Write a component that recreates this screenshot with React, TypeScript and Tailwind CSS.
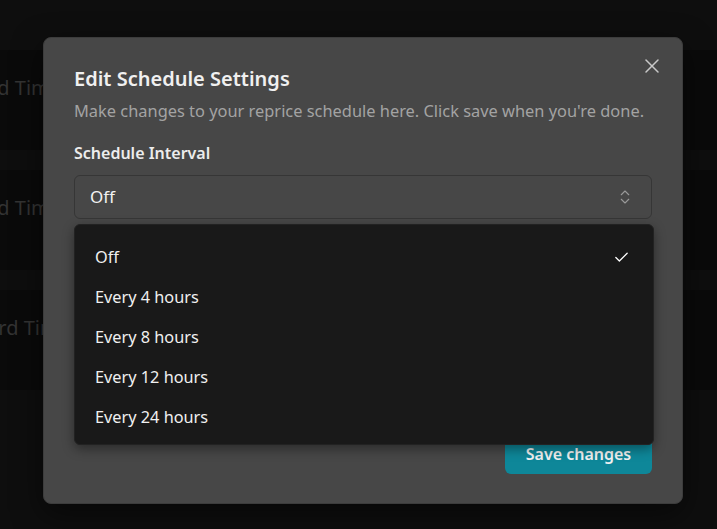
import React from "react";
import { X, ChevronsUpDown, Check } from "lucide-react";

const font = { fontFamily: '"Noto Sans", "Open Sans", sans-serif' };

export default function App() {
  const cards = ["Scheduled Time", "Scheduled Time", "Standard Time"];
  const items = ["Off", "Every 4 hours", "Every 8 hours", "Every 12 hours", "Every 24 hours"];
  return (
    <div className="relative w-[717px] h-[529px] overflow-hidden bg-[#0e0e0e]" style={font}>
      <div className="flex flex-col gap-[20px] pt-[50px]">
        {cards.map((c, i) => (
          <div key={i} className="h-[100px] bg-[#0a0a0a] pt-[24px]">
            <div className={`text-[20px] leading-[28px] text-[#333333] whitespace-nowrap ${i === 2 ? "-ml-[67px]" : "-ml-[88px]"}`}>{c}</div>
          </div>
        ))}
      </div>

      <div className="absolute left-[43px] top-[37px] w-[640px] h-[467px] rounded-lg border border-[#3c3c3c] bg-[#474747] shadow-[0_10px_30px_rgba(0,0,0,0.5)] flex flex-col px-[30px] pt-[27px] pb-[29px]">
        <button className="absolute right-[18px] top-[16px] text-[#c8c8c8]">
          <X size={24} strokeWidth={1.5} />
        </button>
        <div className="text-[20px] leading-[28px] font-semibold text-[#f0f0f0]">Edit Schedule Settings</div>
        <div className="mt-[6px] text-[16.4px] leading-[24px] text-[#a3a3a3] whitespace-nowrap">Make changes to your reprice schedule here. Click save when you're done.</div>
        <div className="mt-[18px] text-[16px] leading-[24px] font-semibold text-[#ececec]">Schedule Interval</div>
        <div className="mt-[10px] h-[44px] rounded-md border border-[#363636] bg-[#474747] flex items-center justify-between pl-[15px] pr-[17px]">
          <span className="text-[17px] text-[#f2f2f2]">Off</span>
          <ChevronsUpDown size={18} strokeWidth={1.5} className="text-[#9a9a9a]" />
        </div>
        <div className="mt-auto flex justify-end">
          <button className="h-[40px] w-[147px] rounded-md bg-[#0e8799] text-[16px] font-semibold text-[#f2f2f2]">Save changes</button>
        </div>
      </div>

      <div className="absolute left-[74px] top-[224px] w-[580px] h-[221px] rounded-md border border-[#222222] bg-[#191919] shadow-[0_4px_12px_rgba(0,0,0,0.4)] pt-[12px]">
        {items.map((it, i) => (
          <div key={i} className="h-[40px] flex items-center justify-between pl-[20px] pr-[23px]">
            <span className="text-[16.3px] text-[#f0f0f0]">{it}</span>
            {i === 0 && <Check size={17} strokeWidth={1.8} className="text-white" />}
          </div>
        ))}
      </div>
    </div>
  );
}
